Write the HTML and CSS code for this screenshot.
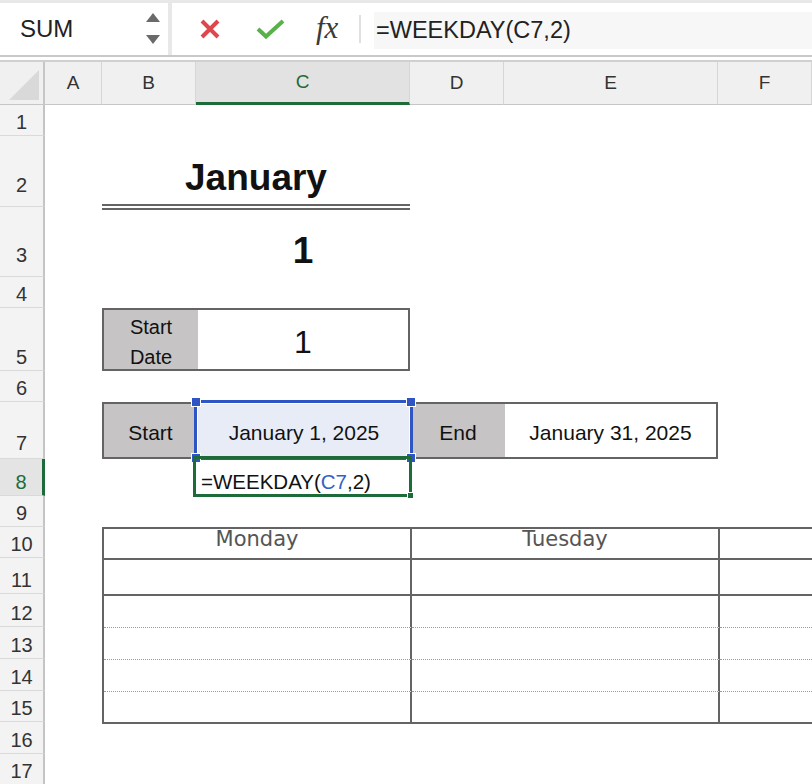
FILE: index.html
```html
<!DOCTYPE html>
<html lang="en">
<head>
  <meta charset="UTF-8" />
  <title>Calendar - WEEKDAY</title>
  <link rel="stylesheet" href="styles.css">
</head>
<body>

  <!-- Barra de fórmulas -->
  <div class="formula-bar">
    <div class="name-box">
      <span>SUM</span>
      <svg class="spinner" width="16" height="34" viewBox="0 0 16 34">
        <polygon points="1,10 8,1 15,10" />
        <polygon points="1,23 15,23 8,32" />
      </svg>
    </div>
    <div class="formula-tools">
      <svg class="icon-cancel" width="22" height="22" viewBox="0 0 22 22">
        <path d="M3 3 L19 19 M19 3 L3 19" />
      </svg>
      <svg class="icon-enter" width="30" height="22" viewBox="0 0 30 22">
        <path d="M2 11 L10 18.5 L27 3" />
      </svg>
      <span class="fx">fx</span>
      <span class="divider"></span>
      <div class="formula-input">=WEEKDAY(C7,2)</div>
    </div>
  </div>

  <!-- Cabeceras de columna -->
  <div class="col-headers">
    <div class="corner">
      <svg width="30" height="30" viewBox="0 0 30 30"><polygon points="0,30 30,0 30,30" /></svg>
    </div>
    <div class="col-head">A</div>
    <div class="col-head">B</div>
    <div class="col-head active">C</div>
    <div class="col-head">D</div>
    <div class="col-head">E</div>
    <div class="col-head">F</div>
  </div>

  <div class="sheet">
    <div class="row-heads">
      <div class="row-head">1</div>
      <div class="row-head tall">2</div>
      <div class="row-head tall">3</div>
      <div class="row-head">4</div>
      <div class="row-head">5</div>
      <div class="row-head">6</div>
      <div class="row-head mid">7</div>
      <div class="row-head active">8</div>
      <div class="row-head">9</div>
      <div class="row-head">10</div>
      <div class="row-head">11</div>
      <div class="row-head">12</div>
      <div class="row-head">13</div>
      <div class="row-head">14</div>
      <div class="row-head">15</div>
      <div class="row-head">16</div>
      <div class="row-head">17</div>
    </div>

    <div class="cells">
      <div class="title">January</div>
      <div class="month-num">1</div>

      <div class="start-box">
        <div class="label-cell">Start<br>Date</div>
        <div class="start-value">1</div>
      </div>

      <div class="range">
        <div class="label-cell range-text">Start</div>
        <div class="range-text selected">
          January 1, 2025
          <div class="selection">
            <span class="handle tl"></span>
            <span class="handle tr"></span>
            <span class="handle bl"></span>
            <span class="handle br"></span>
          </div>
        </div>
        <div class="label-cell range-text">End</div>
        <div class="range-text">January 31, 2025</div>
      </div>

      <div class="formula-cell">
        <span>=WEEKDAY(<span class="ref">C7</span>,2)</span>
        <span class="fill-handle"></span>
      </div>

      <div class="week">
        <div class="wk wk-head">Monday</div>
        <div class="wk wk-head">Tuesday</div>
        <div class="wk wk-head open"></div>
        <div class="wk wk-solid"></div>
        <div class="wk wk-solid"></div>
        <div class="wk wk-solid open"></div>
        <div class="wk wk-dot"></div>
        <div class="wk wk-dot"></div>
        <div class="wk wk-dot open"></div>
        <div class="wk wk-dot"></div>
        <div class="wk wk-dot"></div>
        <div class="wk wk-dot open"></div>
        <div class="wk wk-dot"></div>
        <div class="wk wk-dot"></div>
        <div class="wk wk-dot open"></div>
        <div class="wk wk-solid"></div>
        <div class="wk wk-solid"></div>
        <div class="wk wk-solid open"></div>
      </div>
    </div>
  </div>

</body>
</html>
```

FILE: styles.css
```css
:root {
  --rows: 31px 71px 70px 31px 63px 31px 57px 37px 31px 31px 36px 33px 32px 32px 31px 32px 31px;
  --cols: 57px 94px 214px 94px 214px 1fr;
  --line: #646464;
  --fill: #c6c4c5;
  --green: #1e6b3a;
  --blue: #2f55c5;
}
* {
  box-sizing: border-box;
}
body {
  margin: 0;
  width: 812px;
  height: 784px;
  overflow: hidden;
  background: #fff;
  color: #111;
  font-family: "Liberation Sans", Arial, sans-serif;
}

/* Barra de fórmulas */
.formula-bar {
  display: flex;
  gap: 4px;
  height: 57px;
  padding-top: 3px;
  background: #e8e8e8;
  border-bottom: 2px solid #c9c9c9;
}
.name-box {
  width: 168px;
  display: flex;
  align-items: center;
  justify-content: space-between;
  padding: 0 7px 0 20px;
  background: #fff;
  font-size: 24px;
  color: #222;
}
.spinner polygon {
  fill: #6a6a6a;
}
.formula-tools {
  flex: 1;
  display: flex;
  align-items: center;
  background: #fff;
}
.icon-cancel {
  margin-left: 27px;
}
.icon-cancel path {
  stroke: #e0474c;
  stroke-width: 4;
  fill: none;
}
.icon-enter {
  margin-left: 35px;
}
.icon-enter path {
  stroke: #58b149;
  stroke-width: 4;
  fill: none;
}
.fx {
  margin-left: 30px;
  width: 32px;
  font-family: "Liberation Serif", "Times New Roman", serif;
  font-style: italic;
  font-size: 31px;
  color: #3a3a3a;
  padding-bottom: 3px;
}
.divider {
  margin-left: 11px;
  width: 2px;
  height: 28px;
  background: #e0e0e0;
}
.formula-input {
  flex: 1;
  align-self: stretch;
  display: flex;
  align-items: center;
  margin: 9px 0 6px 13px;
  padding-left: 2px;
  background: #f7f7f7;
  font-size: 23.5px;
  color: #222;
}

/* Cabeceras de columna */
.col-headers {
  display: grid;
  grid-template-columns: 45px var(--cols);
  height: 45px;
  margin-top: 3px;
  border-top: 2px solid #d0d0d0;
  background: #f0f0f0;
}
.corner {
  display: flex;
  align-items: flex-end;
  justify-content: flex-end;
  padding: 0 4px 4px 0;
  border-right: 2px solid #c6c6c6;
  border-bottom: 1px solid #c6c6c6;
}
.corner polygon {
  fill: #d9d9d9;
}
.col-head {
  display: flex;
  align-items: center;
  justify-content: center;
  font-size: 19px;
  color: #333;
  border-right: 1px solid #d6d6d6;
  border-bottom: 1px solid #c6c6c6;
}
.col-head.active {
  background: #e2e2e2;
  color: var(--green);
  border-bottom: 3px solid var(--green);
}

/* Hoja */
.sheet {
  display: grid;
  grid-template-columns: 45px 1fr;
}
.row-heads {
  display: grid;
  grid-template-rows: var(--rows);
  background: #f3f3f3;
}
.row-head {
  display: flex;
  align-items: flex-end;
  justify-content: center;
  padding-bottom: 3px;
  font-size: 20px;
  line-height: 20px;
  color: #333;
  border-right: 2px solid #c4c4c4;
  border-bottom: 1px solid #dadada;
}
.row-head.tall {
  padding-bottom: 11px;
}
.row-head.mid {
  padding-bottom: 5px;
}
.row-head.active {
  background: #e4e4e4;
  color: var(--green);
  border-right: 3px solid var(--green);
}
.cells {
  display: grid;
  grid-template-columns: var(--cols);
  grid-template-rows: var(--rows);
}

.title {
  grid-row: 2;
  grid-column: 2 / 4;
  display: flex;
  align-items: flex-end;
  justify-content: center;
  margin-bottom: -3px;
  padding-bottom: 8px;
  border-bottom: 6px double var(--line);
  font-size: 37px;
  line-height: 37px;
  font-weight: bold;
}
.month-num {
  grid-row: 3;
  grid-column: 3;
  display: flex;
  align-items: flex-end;
  justify-content: center;
  padding-bottom: 8px;
  font-size: 37px;
  line-height: 37px;
  font-weight: bold;
}

.label-cell {
  background: var(--fill);
  display: flex;
  align-items: center;
  justify-content: center;
  text-align: center;
}
.start-box {
  grid-row: 5;
  grid-column: 2 / 4;
  display: grid;
  grid-template-columns: 94px 1fr;
  grid-template-rows: minmax(0, 1fr);
  border: 2px solid var(--line);
}
.start-box .label-cell {
  font-size: 20px;
  line-height: 30px;
  padding-top: 5px;
  min-height: 0;
}
.start-value {
  display: flex;
  align-items: center;
  justify-content: center;
  padding-top: 5px;
  font-size: 32px;
}

.range {
  grid-row: 7;
  grid-column: 2 / 6;
  display: grid;
  grid-template-columns: 93px 214px 94px 1fr;
  border: 2px solid var(--line);
}
.range-text {
  display: flex;
  align-items: center;
  justify-content: center;
  padding-top: 4px;
  font-size: 21px;
}
.selected {
  position: relative;
  background: #e8ecf7;
}
.selection {
  position: absolute;
  inset: -4px -2px -3px -3px;
  border: 3px solid var(--blue);
  box-shadow: inset 0 0 0 1px #fff;
}
.handle {
  position: absolute;
  width: 10px;
  height: 10px;
  background: var(--blue);
  border: 1px solid #fff;
}
.handle.tl { top: -6px; left: -6px; }
.handle.tr { top: -6px; right: -6px; }
.handle.bl { bottom: -6px; left: -6px; }
.handle.br { bottom: -6px; right: -6px; }

.formula-cell {
  grid-row: 8;
  grid-column: 3;
  position: relative;
  display: flex;
  align-items: flex-end;
  margin: -3px -2px -1px -3px;
  padding: 0 0 2px 5px;
  border: 3px solid var(--green);
  font-size: 20.5px;
  line-height: 20px;
  color: #111;
}
.formula-cell .ref {
  color: #2f62c8;
}
.fill-handle {
  position: absolute;
  right: -5px;
  bottom: -5px;
  width: 7px;
  height: 7px;
  background: var(--green);
  border: 1px solid #fff;
}

/* Tabla semanal */
.week {
  grid-row: 10 / 17;
  grid-column: 2 / 7;
  align-self: start;
  display: grid;
  grid-template-columns: 308px 308px 1fr;
  grid-template-rows: 31px 36px 32px 32px 32px 32px;
  border-top: 2px solid var(--line);
  border-left: 2px solid var(--line);
}
.wk {
  border-right: 2px solid var(--line);
}
.wk.open {
  border-right: none;
}
.wk-head {
  border-bottom: 2px solid var(--line);
  text-align: center;
  font-family: "DejaVu Sans", Verdana, sans-serif;
  font-size: 21px;
  line-height: 21px;
  color: #555;
}
.wk-solid {
  border-bottom: 2px solid var(--line);
}
.wk-dot {
  border-bottom: 1px dotted #9a9a9a;
}
```
